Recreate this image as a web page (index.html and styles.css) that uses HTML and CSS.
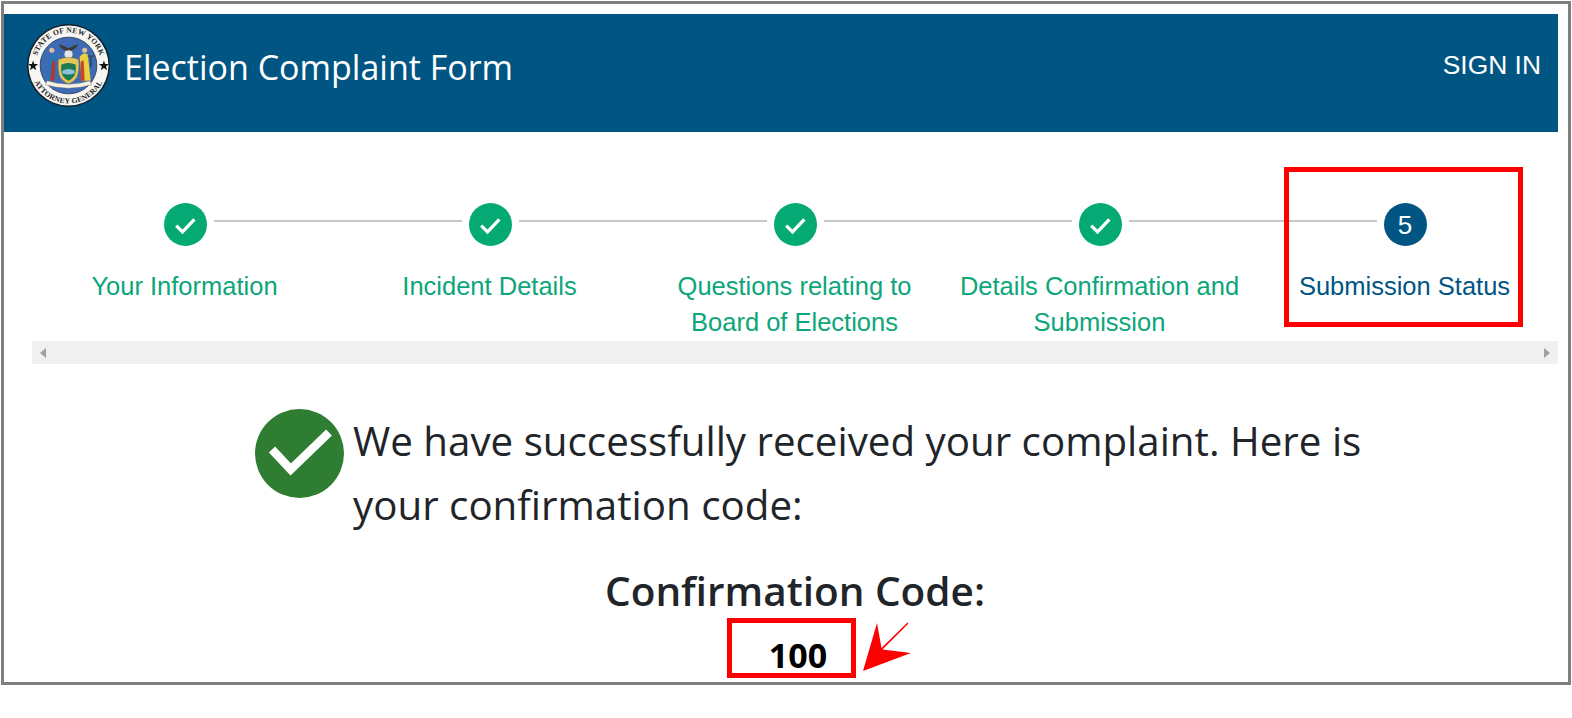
FILE: index.html
```html
<!DOCTYPE html>
<html lang="en">
<head>
<meta charset="utf-8">
<title>Election Complaint Form</title>
<link rel="stylesheet" href="styles.css">
</head>
<body>
<div class="frame">
  <header class="topbar">
    <div class="brand">
      <svg class="seal" viewBox="0 0 82 82" aria-hidden="true">
        <defs>
          <path id="arc-top" d="M8.500 41a32.500 32.500 0 0 1 65 0"/>
          <path id="arc-bottom" d="M3.500 41a37.500 37.500 0 0 0 75 0"/>
        </defs>
        <circle cx="41" cy="41" r="41" fill="#15202b"/>
        <circle cx="41" cy="41" r="39.500" fill="#f6f6f3"/>
        <text class="seal-text"><textPath href="#arc-top" startOffset="50%">STATE OF NEW YORK</textPath></text>
        <text class="seal-text"><textPath href="#arc-bottom" startOffset="50%">ATTORNEY GENERAL</textPath></text>
        <path d="M6 36l1.200 3.600h3.800l-3 2.300 1.100 3.700L6 43.400l-3.100 2.200L4 41.900l-3-2.300h3.800z" fill="#111"/>
        <path d="M76 36l1.200 3.600H81l-3 2.300 1.100 3.700-3.100-2.200-3.100 2.200 1.100-3.700-3-2.300h3.800z" fill="#111"/>
        <circle cx="41" cy="41" r="28" fill="#3f6bb5" stroke="#26344f" stroke-width=".8"/>
        <path d="M31 20q5 1 10 4 5-3 10-4-3 5-7 6l-3 3-3-3q-4-1-7-6z" fill="#3d3a36"/>
        <circle cx="41" cy="30" r="4" fill="#dfe7e0"/>
        <path d="M31 35q10-4 20 0 1 12-2 18-4 5-8 6-4-1-8-6-3-6-2-18z" fill="#e4c65a" stroke="#8a7430" stroke-width=".5"/>
        <path d="M34 40q7-3 14 0 1 9-2 12-2 3-5 4-3-1-5-4-3-3-2-12z" fill="#1c7a55"/>
        <path d="M35 46q6-3 12 0v3q-6 2-12 0z" fill="#8cc1de"/>
        <path d="M22 30l4-1 4 3-2 24H19z" fill="#2c74b5"/>
        <path d="M25 36l3 1-1 19h-4z" fill="#b53434"/>
        <circle cx="24.500" cy="26" r="2.500" fill="#e1bd9f"/>
        <path d="M52 32l4-3 4 1 3 26h-9z" fill="#e8d040"/>
        <path d="M53 37l3-1 1 20h-4z" fill="#c4452c"/>
        <circle cx="57" cy="26" r="2.500" fill="#e1bd9f"/>
        <path d="M60 31h6v1h-6zM62.500 31v12h1V31z" fill="#2d2d2d"/>
        <path d="M20 56q21 7 42 0l2 4q-23 7-46 0z" fill="#f4f0e2" stroke="#6e6a58" stroke-width=".4"/>
      </svg>
      <h1 class="title">Election Complaint Form</h1>
    </div>
    <a class="signin" href="#">SIGN IN</a>
  </header>

  <section class="stepper-wrap">
    <ol class="stepper">
      <li class="step done">
        <span class="dot"><svg class="tick" viewBox="0 0 24 24"><path d="M5 12.500l5 5L19.500 7.500"/></svg></span>
        <span class="label">Your Information</span>
      </li>
      <li class="step done">
        <span class="dot"><svg class="tick" viewBox="0 0 24 24"><path d="M5 12.500l5 5L19.500 7.500"/></svg></span>
        <span class="label">Incident Details</span>
      </li>
      <li class="step done">
        <span class="dot"><svg class="tick" viewBox="0 0 24 24"><path d="M5 12.500l5 5L19.500 7.500"/></svg></span>
        <span class="label">Questions relating to Board of Elections</span>
      </li>
      <li class="step done">
        <span class="dot"><svg class="tick" viewBox="0 0 24 24"><path d="M5 12.500l5 5L19.500 7.500"/></svg></span>
        <span class="label">Details Confirmation and Submission</span>
      </li>
      <li class="step current">
        <span class="dot">5</span>
        <span class="label">Submission Status</span>
      </li>
    </ol>
    <div class="scrollbar">
      <span class="arrow arrow-left"></span>
      <span class="arrow arrow-right"></span>
    </div>
    <div class="mark mark-step"></div>
  </section>

  <main class="result">
    <div class="message">
      <svg class="success" viewBox="0 0 89 89" aria-hidden="true">
        <circle cx="44.500" cy="44.500" r="44.500" fill="#2e7d32"/>
        <path d="M17 40.500L35.700 60.500 74 23.500" fill="none" stroke="#fff" stroke-width="8.500"/>
      </svg>
      <p class="text">We have successfully received your complaint. Here is your confirmation code:</p>
    </div>
    <h2 class="code-title">Confirmation Code:</h2>
    <div class="code-row">
      <div class="code-box"><strong class="code">100</strong></div>
      <svg class="pointer" viewBox="0 0 54 54" aria-hidden="true">
        <path d="M3 52L17 4l4.500 25L47.500 3.500l1 1-26 26L51 34z" fill="#f00"/>
      </svg>
    </div>
  </main>
</div>
</body>
</html>
```
FILE: styles.css
```css
* { box-sizing: border-box; }
html, body { margin: 0; padding: 0; background: #fff; }
body { width: 1572px; height: 718px; overflow: hidden; padding: 1px 1px 0 1px; }

.frame {
  width: 1570px;
  height: 684px;
  border: 3px solid #7f7f7f;
  padding-top: 10px;
  padding-right: 10px;
  position: relative;
  overflow: hidden;
}

.topbar {
  height: 118px;
  background: #005583;
  color: #fff;
  display: flex;
  justify-content: space-between;
  align-items: flex-start;
  padding: 10px 17px 0 23px;
}
.brand { display: flex; align-items: center; gap: 14px; }
.seal { width: 83px; height: 83px; display: block; }
.seal-text {
  font: 700 7.500px "Liberation Serif", serif;
  letter-spacing: .2px;
  text-anchor: middle;
  fill: #222;
}
.title {
  margin: 2px 0 0;
  font: 400 34px/44px "Open Sans", sans-serif;
  color: #fff;
}
.signin {
  color: #fff;
  text-decoration: none;
  font: 400 26.400px/28px "Liberation Sans", Arial, sans-serif;
  margin-top: 27px;
}

.stepper-wrap {
  position: relative;
  margin-left: 28px;
  padding-top: 71px;
}
.stepper {
  list-style: none;
  margin: 0;
  padding: 0;
  display: grid;
  grid-template-columns: repeat(5, 305px);
  height: 138px;
}
.step {
  position: relative;
  display: flex;
  flex-direction: column;
  align-items: center;
  text-align: center;
}
.step + .step::before {
  content: "";
  position: absolute;
  top: 17px;
  left: -123px;
  width: 248px;
  height: 2px;
  background: #c8c8c8;
}
.dot {
  width: 43px;
  height: 43px;
  margin-left: 1px;
  border-radius: 50%;
  display: flex;
  align-items: center;
  justify-content: center;
  color: #fff;
  font: 400 26px/1 "Liberation Sans", Arial, sans-serif;
}
.done .dot { background: #05a974; }
.current .dot { background: #005583; }
.tick { width: 30px; height: 30px; fill: none; stroke: #fff; stroke-width: 2.600; }
.label {
  margin-top: 23px;
  width: 290px;
  font: 400 25.500px/35.500px "Liberation Sans", Arial, sans-serif;
}
.done .label { color: #0ca67a; }
.current .label { color: #005583; }

.scrollbar {
  height: 23px;
  width: 1526px;
  background: #f0f0f0;
  display: flex;
  justify-content: space-between;
  align-items: center;
  padding: 0 8px;
}
.arrow { width: 0; height: 0; border-top: 5px solid transparent; border-bottom: 5px solid transparent; }
.arrow-left { border-right: 6px solid #a0a0a0; }
.arrow-right { border-left: 6px solid #a0a0a0; }

.mark { position: absolute; border: 5px solid #f00; }
.mark-step { left: 1252px; top: 35px; width: 239px; height: 160px; }

.result { position: relative; }
.message {
  display: flex;
  align-items: flex-start;
  gap: 9px;
  margin: 45px 0 0 251px;
  width: 1130px;
}
.success { width: 89px; height: 89px; flex: none; display: block; }
.text {
  margin: 0;
  width: 1030px;
  font: 400 40.300px/64px "Open Sans", sans-serif;
  color: #212529;
}
.code-title {
  margin: 30px 0 0 241px;
  width: 1100px;
  text-align: center;
  font: 600 40.500px/48px "Open Sans", sans-serif;
  color: #212529;
}
.code-row {
  position: relative;
  margin: 3px 0 0 723px;
  display: flex;
  align-items: flex-start;
}
.code-box {
  width: 129px;
  height: 60px;
  border: 5px solid #f00;
  display: flex;
  align-items: flex-end;
  justify-content: center;
  padding: 0 0 0 13px;
}
.code {
  font: 700 34px/36px "Open Sans", sans-serif;
  color: #000;
}
.pointer { position: absolute; left: 133px; top: 1px; width: 54px; height: 54px; }
```
